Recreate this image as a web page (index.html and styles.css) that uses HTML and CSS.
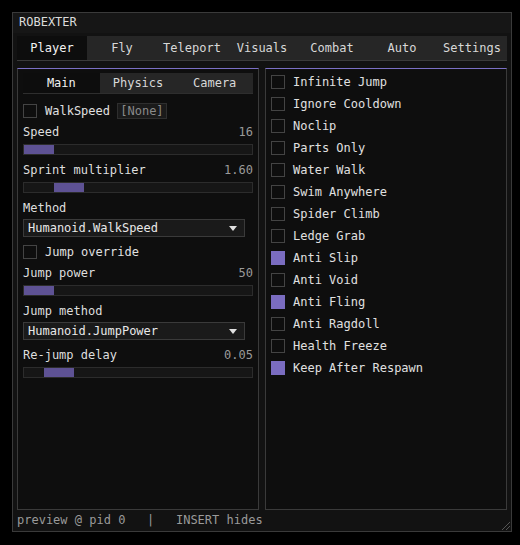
FILE: index.html
```html
<!DOCTYPE html>
<html lang="en">
<head>
  <meta charset="UTF-8">
  <title>Robexter</title>
  <link rel="stylesheet" href="styles.css">
</head>
<body>
  <div class="window">
    <div class="titlebar">ROBEXTER</div>

    <!-- Top tabs -->
    <div class="tabs">
      <div class="tab active">Player</div>
      <div class="tab">Fly</div>
      <div class="tab">Teleport</div>
      <div class="tab">Visuals</div>
      <div class="tab">Combat</div>
      <div class="tab">Auto</div>
      <div class="tab">Settings</div>
    </div>

    <div class="columns">
      <!-- Left panel -->
      <div class="panel left">
        <div class="subtabs">
          <div class="subtab active">Main</div>
          <div class="subtab">Physics</div>
          <div class="subtab">Camera</div>
        </div>

        <div class="check-row">
          <span class="box"></span>WalkSpeed <span class="keybind">[None]</span>
        </div>

        <div class="label-row"><span>Speed</span><span class="value">16</span></div>
        <div class="slider"><div class="fill" style="left: 0; width: 30px;"></div></div>

        <div class="label-row"><span>Sprint multiplier</span><span class="value">1.60</span></div>
        <div class="slider"><div class="fill" style="left: 30px; width: 30px;"></div></div>

        <div class="label-row"><span>Method</span></div>
        <div class="dropdown">Humanoid.WalkSpeed<span class="arrow"></span></div>

        <div class="check-row jump">
          <span class="box"></span>Jump override
        </div>

        <div class="label-row"><span>Jump power</span><span class="value">50</span></div>
        <div class="slider"><div class="fill" style="left: 0; width: 30px;"></div></div>

        <div class="label-row"><span>Jump method</span></div>
        <div class="dropdown">Humanoid.JumpPower<span class="arrow"></span></div>

        <div class="label-row"><span>Re-jump delay</span><span class="value">0.05</span></div>
        <div class="slider"><div class="fill" style="left: 20px; width: 30px;"></div></div>
      </div>

      <!-- Right panel -->
      <div class="panel right">
        <div class="toggle"><span class="box"></span>Infinite Jump</div>
        <div class="toggle"><span class="box"></span>Ignore Cooldown</div>
        <div class="toggle"><span class="box"></span>Noclip</div>
        <div class="toggle"><span class="box"></span>Parts Only</div>
        <div class="toggle"><span class="box"></span>Water Walk</div>
        <div class="toggle"><span class="box"></span>Swim Anywhere</div>
        <div class="toggle"><span class="box"></span>Spider Climb</div>
        <div class="toggle"><span class="box"></span>Ledge Grab</div>
        <div class="toggle"><span class="box on"></span>Anti Slip</div>
        <div class="toggle"><span class="box"></span>Anti Void</div>
        <div class="toggle"><span class="box on"></span>Anti Fling</div>
        <div class="toggle"><span class="box"></span>Anti Ragdoll</div>
        <div class="toggle"><span class="box"></span>Health Freeze</div>
        <div class="toggle"><span class="box on"></span>Keep After Respawn</div>
      </div>
    </div>

    <div class="status">preview @ pid 0&nbsp;&nbsp;&nbsp;|&nbsp;&nbsp;&nbsp;INSERT hides</div>
    <div class="grip"></div>
  </div>
</body>
</html>
```

FILE: styles.css
```css
body {
  margin: 0;
  background-color: #000;
  color: #e0e0e0;
  font-family: "DejaVu Sans Mono", monospace;
  font-size: 12px;
  padding: 12px;
}

/* Main window */
.window {
  position: relative;
  width: 498px;
  height: 518px;
  background: #121212;
  border: 1px solid #3a3a3a;
  display: flex;
  flex-direction: column;
}

.titlebar {
  height: 20px;
  line-height: 19px;
  padding-left: 6px;
  background: #161616;
  color: #dcdcdc;
}

/* Top tabs */
.tabs {
  display: flex;
  margin: 3px 4px 0;
  height: 24px;
  background: #262626;
  border-bottom: 1px solid #3a3a3a;
}

.tab {
  flex: 1;
  text-align: center;
  line-height: 24px;
  color: #d8d8d8;
}

.tab.active {
  background: #0d0d0d;
  color: #f2f2f2;
}

/* Columns */
.columns {
  display: flex;
  gap: 6px;
  margin: 7px 4px 0;
  height: 442px;
}

.panel {
  flex: 1;
  background: #0e0e0e;
  border: 1px solid #3a3a3a;
  border-top: 1px solid #7a6fc4;
}

.panel.left {
  padding: 4px 5px 0;
}

.panel.right {
  padding: 6px 5px 0;
}

/* Sub tabs */
.subtabs {
  display: flex;
  height: 20px;
  background: #262626;
  border-bottom: 1px solid #2e2e2e;
  margin-bottom: 9px;
}

.subtab {
  flex: 1;
  text-align: center;
  line-height: 20px;
  color: #d8d8d8;
}

.subtab.active {
  background: #0d0d0d;
  color: #f2f2f2;
}

/* Checkbox */
.box {
  display: inline-block;
  width: 12px;
  height: 12px;
  border: 1px solid #444;
  margin-right: 8px;
  vertical-align: top;
  margin-top: 1px;
}

.box.on {
  background: #7a6cc0;
  border-color: #7a6cc0;
}

.check-row {
  height: 16px;
  line-height: 16px;
  margin-bottom: 5px;
  color: #e0e0e0;
}

.check-row.jump {
  margin-top: 7px;
  margin-bottom: 5px;
}

.keybind {
  display: inline-block;
  padding: 0 2px;
  height: 14px;
  line-height: 14px;
  background: #1a1a1a;
  border: 1px solid #2e2e2e;
  color: #8a8a8a;
}

.label-row {
  display: flex;
  justify-content: space-between;
  height: 16px;
  line-height: 16px;
  color: #dedede;
}

.value {
  color: #9a9a9a;
}

/* Slider */
.slider {
  position: relative;
  height: 9px;
  margin: 4px 0 7px;
  background: #161616;
  border: 1px solid #2c2c2c;
}

.fill {
  position: absolute;
  top: 0;
  bottom: 0;
  background: #5e5294;
}

/* Dropdown */
.dropdown {
  position: relative;
  width: 216px;
  height: 16px;
  line-height: 16px;
  padding-left: 4px;
  margin-top: 3px;
  background: #1a1a1a;
  border: 1px solid #3a3a3a;
  color: #e8e8e8;
}

.label-row + .dropdown + .label-row {
  margin-top: 7px;
}

.arrow {
  position: absolute;
  right: 7px;
  top: 6px;
  width: 0;
  height: 0;
  border-left: 4px solid transparent;
  border-right: 4px solid transparent;
  border-top: 5px solid #e0e0e0;
}

/* Right side toggles */
.toggle {
  height: 22px;
  line-height: 14px;
  color: #e0e0e0;
}

.toggle .box {
  margin-top: 0;
}

/* Status bar */
.status {
  padding: 2px 4px 0;
  color: #9a9a9a;
  line-height: 16px;
}

.grip {
  position: absolute;
  right: 1px;
  bottom: 1px;
  width: 8px;
  height: 8px;
  background: linear-gradient(135deg, transparent 45%, #555 45%, #555 55%, transparent 55%, transparent 70%, #555 70%, #555 80%, transparent 80%);
}
```
